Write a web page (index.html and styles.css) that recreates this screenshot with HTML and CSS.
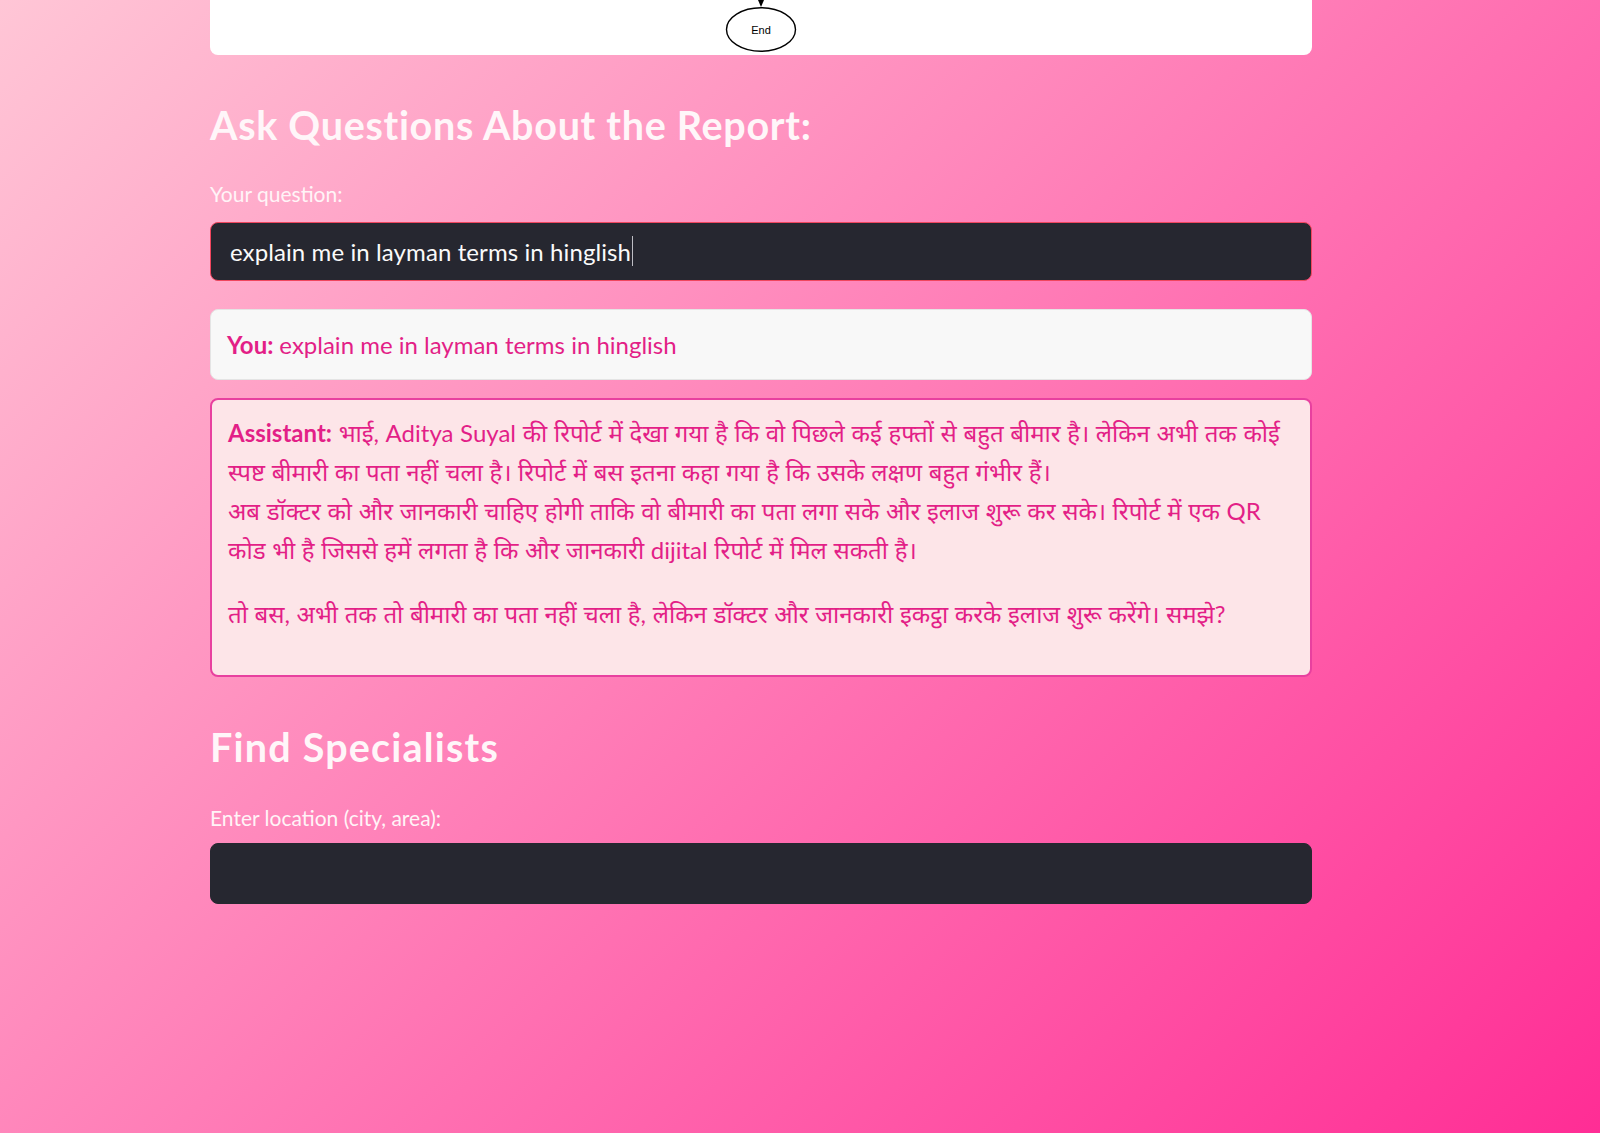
FILE: index.html
```html
<!DOCTYPE html>
<html lang="en">
<head>
<meta charset="utf-8">
<title>Report Q&amp;A</title>
<link rel="stylesheet" href="styles.css">
</head>
<body>
<main class="main">
  <div class="flow-card">
    <svg class="flow-svg" width="90" height="75" viewBox="0 0 90 75" aria-hidden="true">
      <line x1="45" y1="0" x2="45" y2="22" stroke="#000" stroke-width="1.3"/>
      <polygon points="42,20 48,20 45,27" fill="#000"/>
      <ellipse cx="45" cy="49.5" rx="34.5" ry="21.8" fill="#fff" stroke="#000" stroke-width="1.4"/>
      <text x="45" y="53.5" text-anchor="middle" class="flow-text">End</text>
    </svg>
  </div>

  <h2 class="section-title first">Ask Questions About the Report:</h2>
  <label class="field-label first-label" for="q">Your question:</label>
  <div class="text-input focused" id="q">explain me in layman terms in hinglish<span class="caret"></span></div>

  <div class="msg msg-user"><strong>You:</strong> explain me in layman terms in hinglish</div>

  <div class="msg msg-assistant">
    <p><strong>Assistant:</strong> भाई, Aditya Suyal की रिपोर्ट में देखा गया है कि वो पिछले कई हफ्तों से बहुत बीमार है। लेकिन अभी तक कोई<br>स्पष्ट बीमारी का पता नहीं चला है। रिपोर्ट में बस इतना कहा गया है कि उसके लक्षण बहुत गंभीर हैं।<br>अब डॉक्टर को और जानकारी चाहिए होगी ताकि वो बीमारी का पता लगा सके और इलाज शुरू कर सके। रिपोर्ट में एक QR<br>कोड भी है जिससे हमें लगता है कि और जानकारी dijital रिपोर्ट में मिल सकती है।</p>
    <p>तो बस, अभी तक तो बीमारी का पता नहीं चला है, लेकिन डॉक्टर और जानकारी इकट्ठा करके इलाज शुरू करेंगे। समझे?</p>
  </div>

  <h2 class="section-title second">Find Specialists</h2>
  <label class="field-label second-label" for="loc">Enter location (city, area):</label>
  <div class="text-input tall" id="loc"></div>
</main>
</body>
</html>
```

FILE: styles.css
```css
html {
  height: 100%;
}
body {
  margin: 0;
  min-height: 100%;
  background: linear-gradient(135deg, #ffc6d6 0%, #ff2d95 100%);
  font-family: "Lato", "Noto Sans Devanagari", "Noto Sans", sans-serif;
  color: #fafafa;
  overflow: hidden;
}
.main {
  width: 1102px;
  margin-left: 210px;
  display: flex;
  flex-direction: column;
}
.flow-card {
  height: 75px;
  margin-top: -20px;
  background: #ffffff;
  border-radius: 8px;
  display: flex;
  justify-content: center;
}
.flow-svg {
  display: block;
}
.flow-text {
  font-family: "Liberation Sans", sans-serif;
  font-size: 11px;
  fill: #000;
}
.section-title {
  margin: 0;
  font-size: 39.5px;
  line-height: 47.4px;
  font-weight: 700;
  letter-spacing: 0.7px;
  color: #fff6f9;
}
.section-title.first {
  margin-top: 45.8px;
}
.section-title.second {
  margin-top: 46.3px;
  letter-spacing: 1.2px;
}
.field-label {
  display: block;
  font-size: 21px;
  line-height: 25.2px;
  color: #fff4f7;
}
.first-label {
  margin-top: 33.1px;
}
.second-label {
  margin-top: 34.5px;
}
.text-input {
  box-sizing: border-box;
  margin-top: 15px;
  height: 59px;
  background: #262730;
  border: 1px solid #262730;
  border-radius: 8px;
  padding: 0 19px;
  display: flex;
  align-items: center;
  font-size: 24px;
  letter-spacing: 0.1px;
  color: #fafafa;
}
.text-input.focused {
  border-color: #f0465e;
}
.text-input.tall {
  height: 61px;
  margin-top: 12.6px;
}
.caret {
  display: inline-block;
  width: 1px;
  height: 30px;
  background: #bdbdc4;
  margin-left: 1px;
}
.msg {
  box-sizing: border-box;
  border-radius: 8px;
  color: #e31f87;
  font-size: 24px;
  line-height: 39px;
}
.msg strong {
  font-weight: 700;
}
.msg-user {
  margin-top: 28px;
  height: 71px;
  padding: 0 16px;
  display: flex;
  align-items: center;
  gap: 6px;
  background: #f8f8f8;
  border: 1px solid #e4e4e4;
}
.msg-assistant {
  margin-top: 18px;
  height: 279px;
  padding: 13px 16px;
  background: #fde5e8;
  border: 2px solid #e8409f;
  word-spacing: 0.5px;
}
.msg-assistant p {
  margin: 0 0 25px;
}
```
